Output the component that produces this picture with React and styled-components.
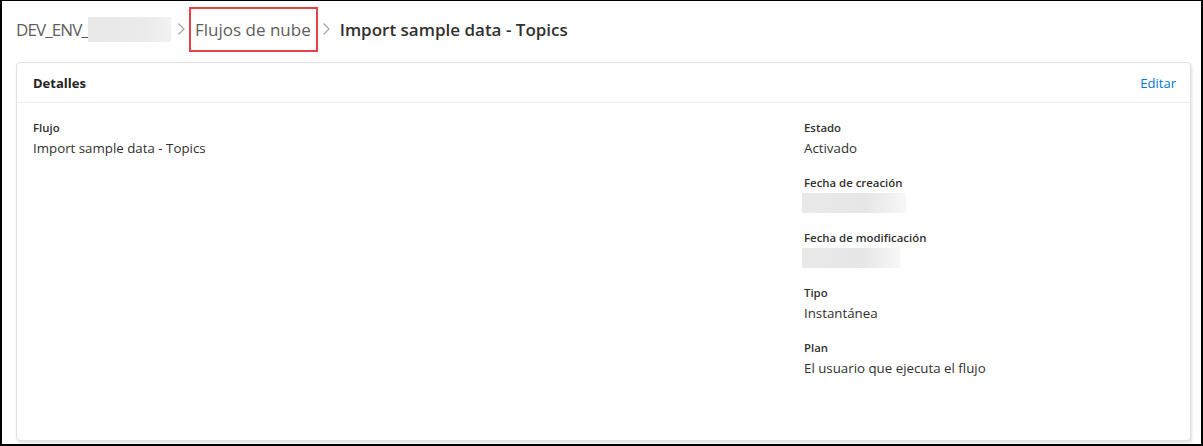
import React from 'react';
import styled, { createGlobalStyle } from 'styled-components';

const GlobalStyle = createGlobalStyle`
  html, body {
    margin: 0;
    padding: 0;
    background: #ffffff;
  }
  body {
    font-family: 'Segoe UI', 'Open Sans', sans-serif;
    color: #323130;
  }
`;

const Frame = styled.div`
  width: 1203px;
  height: 446px;
  box-sizing: border-box;
  border: 2px solid #000;
  border-top-width: 1px;
  padding: 0 10px 3px 14px;
  display: flex;
  flex-direction: column;
  background: #fff;
`;

const Breadcrumb = styled.nav`
  height: 56px;
  margin-bottom: 5px;
  display: flex;
  align-items: center;
  font-size: 17px;
  color: #605e5c;
`;

const Crumb = styled.span`
  display: inline-flex;
  align-items: center;
  white-space: nowrap;
  letter-spacing: ${(p) => p.$tight ? '-0.9px' : 'normal'};
`;

const Blur = styled.span`
  display: inline-block;
  width: ${(p) => p.$w}px;
  height: ${(p) => p.$h}px;
  background: linear-gradient(90deg, #e8e8e8 0%, #ebebeb 70%, #f2f2f2 100%);
`;

const Highlight = styled.span`
  display: inline-flex;
  align-items: center;
  border: 2px solid #e8414a;
  padding: 9px 5px 9px 4px;
  margin: 0 2px 0 3px;
`;

const Current = styled.span`
  font-weight: 600;
  color: #323130;
  margin-left: 9px;
`;

const Chevron = styled.svg`
  width: 9px;
  height: 14px;
  margin-left: ${(p) => p.$ml || 6}px;
  flex: none;
`;

const Card = styled.section`
  flex: 1;
  border: 1px solid #e3e1df;
  border-radius: 4px;
  box-shadow: 1px 2px 3px rgba(0, 0, 0, 0.12);
  display: flex;
  flex-direction: column;
  background: #fff;
`;

const CardHeader = styled.header`
  height: 39px;
  padding: 0 14px 0 16px;
  display: flex;
  align-items: center;
  justify-content: space-between;
  border-bottom: 1px solid #edebe9;
`;

const CardTitle = styled.h2`
  margin: 0;
  font-size: 13px;
  font-weight: 700;
  color: #252423;
`;

const EditLink = styled.a`
  font-size: 13px;
  color: #0078d4;
  text-decoration: none;
  cursor: pointer;
`;

const CardBody = styled.div`
  display: grid;
  grid-template-columns: 1fr 370px;
  padding: 16px 16px;
`;

const Column = styled.div`
  display: flex;
  flex-direction: column;
  gap: 15px;
`;

const Field = styled.div`
  display: flex;
  flex-direction: column;
`;

const Label = styled.span`
  font-size: 11.4px;
  line-height: 18px;
  font-weight: 600;
  color: #323130;
`;

const Value = styled.span`
  font-size: 13.3px;
  line-height: 22px;
  color: #323130;
`;

const ValueBlur = styled(Blur)`
  margin: 1px 0 1px -2px;
  background: linear-gradient(90deg, #e9e9e9 0%, #e6e6e6 60%, #f7f7f7 100%);
`;

const ChevronIcon = ({ ml }) => (
  <Chevron viewBox="0 0 9 14" $ml={ml}>
    <polyline points="1.5,1.5 7,7 1.5,12.5" fill="none" stroke="#a19f9d" strokeWidth="1.1" />
  </Chevron>
);

const leftFields = [{ label: 'Flujo', value: 'Import sample data - Topics' }];

const rightFields = [
  { label: 'Estado', value: 'Activado' },
  { label: 'Fecha de creación', blur: 104 },
  { label: 'Fecha de modificación', blur: 98 },
  { label: 'Tipo', value: 'Instantánea' },
  { label: 'Plan', value: 'El usuario que ejecuta el flujo' },
];

function renderField(field) {
  return (
    <Field key={field.label}>
      <Label>{field.label}</Label>
      {field.blur ? <ValueBlur $w={field.blur} $h={20} /> : <Value>{field.value}</Value>}
    </Field>
  );
}

export default function App() {
  return (
    <>
      <GlobalStyle />
      <Frame>
        <Breadcrumb>
          <Crumb $tight>DEV_ENV_</Crumb>
          <Blur $w={83} $h={25} />
          <ChevronIcon ml={6} />
          <Highlight>Flujos de nube</Highlight>
          <ChevronIcon ml={2} />
          <Current>Import sample data - Topics</Current>
        </Breadcrumb>
        <Card>
          <CardHeader>
            <CardTitle>Detalles</CardTitle>
            <EditLink>Editar</EditLink>
          </CardHeader>
          <CardBody>
            <Column>{leftFields.map(renderField)}</Column>
            <Column>{rightFields.map(renderField)}</Column>
          </CardBody>
        </Card>
      </Frame>
    </>
  );
}
